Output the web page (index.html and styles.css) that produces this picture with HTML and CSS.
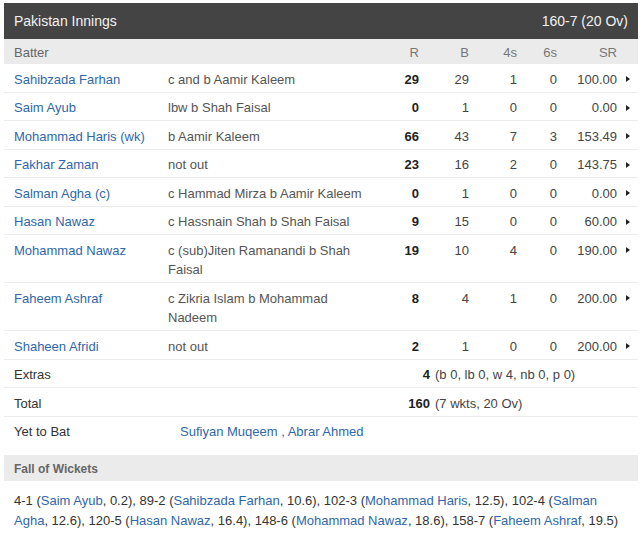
FILE: index.html
```html
<!DOCTYPE html>
<html>
<head>
<meta charset="utf-8">
<link rel="stylesheet" href="styles.css">
</head>
<body>
<div class="card">
  <div class="inn-head"><span>Pakistan Innings</span><span>160-7 (20 Ov)</span></div>

  <div class="bat-row head">
    <div>Batter</div><div></div><div class="n">R</div><div class="n">B</div><div class="n">4s</div><div class="n">6s</div><div class="n">SR</div><div></div>
  </div>

  <div class="bat-row">
    <a class="name">Sahibzada Farhan</a><div class="how">c and b Aamir Kaleem</div><div class="n r">29</div><div class="n">29</div><div class="n">1</div><div class="n">0</div><div class="n">100.00</div><div class="arr"><span class="tri"></span></div>
  </div>
  <div class="bat-row">
    <a class="name">Saim Ayub</a><div class="how">lbw b Shah Faisal</div><div class="n r">0</div><div class="n">1</div><div class="n">0</div><div class="n">0</div><div class="n">0.00</div><div class="arr"><span class="tri"></span></div>
  </div>
  <div class="bat-row">
    <a class="name">Mohammad Haris (wk)</a><div class="how">b Aamir Kaleem</div><div class="n r">66</div><div class="n">43</div><div class="n">7</div><div class="n">3</div><div class="n">153.49</div><div class="arr"><span class="tri"></span></div>
  </div>
  <div class="bat-row">
    <a class="name">Fakhar Zaman</a><div class="how">not out</div><div class="n r">23</div><div class="n">16</div><div class="n">2</div><div class="n">0</div><div class="n">143.75</div><div class="arr"><span class="tri"></span></div>
  </div>
  <div class="bat-row">
    <a class="name">Salman Agha (c)</a><div class="how">c Hammad Mirza b Aamir Kaleem</div><div class="n r">0</div><div class="n">1</div><div class="n">0</div><div class="n">0</div><div class="n">0.00</div><div class="arr"><span class="tri"></span></div>
  </div>
  <div class="bat-row">
    <a class="name">Hasan Nawaz</a><div class="how">c Hassnain Shah b Shah Faisal</div><div class="n r">9</div><div class="n">15</div><div class="n">0</div><div class="n">0</div><div class="n">60.00</div><div class="arr"><span class="tri"></span></div>
  </div>
  <div class="bat-row">
    <a class="name">Mohammad Nawaz</a><div class="how">c (sub)Jiten Ramanandi b Shah Faisal</div><div class="n r">19</div><div class="n">10</div><div class="n">4</div><div class="n">0</div><div class="n">190.00</div><div class="arr"><span class="tri"></span></div>
  </div>
  <div class="bat-row">
    <a class="name">Faheem Ashraf</a><div class="how">c Zikria Islam b Mohammad Nadeem</div><div class="n r">8</div><div class="n">4</div><div class="n">1</div><div class="n">0</div><div class="n">200.00</div><div class="arr"><span class="tri"></span></div>
  </div>
  <div class="bat-row">
    <a class="name">Shaheen Afridi</a><div class="how">not out</div><div class="n r">2</div><div class="n">1</div><div class="n">0</div><div class="n">0</div><div class="n">200.00</div><div class="arr"><span class="tri"></span></div>
  </div>

  <div class="sum-row">
    <div class="lbl">Extras</div><div class="num">4</div><div class="det">(b 0, lb 0, w 4, nb 0, p 0)</div>
  </div>
  <div class="sum-row">
    <div class="lbl">Total</div><div class="num">160</div><div class="det">(7 wkts, 20 Ov)</div>
  </div>
  <div class="ytb-row">
    <div class="lbl">Yet to Bat</div><div class="ytb"><a>Sufiyan Muqeem</a> , <a>Abrar Ahmed</a></div>
  </div>

  <div class="fow-head">Fall of Wickets</div>
  <div class="fow">4-1 (<a>Saim Ayub</a>, 0.2), 89-2 (<a>Sahibzada Farhan</a>, 10.6), 102-3 (<a>Mohammad Haris</a>, 12.5), 102-4 (<a>Salman Agha</a>, 12.6), 120-5 (<a>Hasan Nawaz</a>, 16.4), 148-6 (<a>Mohammad Nawaz</a>, 18.6), 158-7 (<a>Faheem Ashraf</a>, 19.5)</div>
</div>
</body>
</html>
```

FILE: styles.css
```css
html, body {
  margin: 0;
  padding: 0;
  background: #fff;
}
body {
  font-family: "Liberation Sans", Arial, sans-serif;
  font-size: 13px;
  line-height: 19.5px;
  color: #333;
}
.card {
  margin: 3px 4px 0 4px;
  width: 634px;
}
a {
  color: #2f67ad;
  text-decoration: none;
}
.inn-head {
  background: #444444;
  color: #f2f2f2;
  font-size: 14px;
  height: 35px;
  line-height: 35px;
  padding: 1px 10px 0 10px;
  display: flex;
  justify-content: space-between;
}
.bat-row {
  display: grid;
  grid-template-columns: 154px 204px 47px 50px 48px 40px 60px 1fr;
  padding: 5.5px 0 2.5px 10px;
  border-bottom: 1px solid #ececec;
  color: #444;
}
.bat-row.head {
  background: #ebebeb;
  color: #777;
  padding: 4px 0 1.5px 10px;
  border-bottom: none;
}
.bat-row.head > div:first-child {
  color: #666;
}
.how {
  color: #555;
  padding-right: 6px;
}
.n {
  text-align: right;
}
.n.r {
  font-weight: bold;
  color: #222;
}
.arr {
  padding-left: 9px;
  height: 19.5px;
  align-self: start;
  display: flex;
  align-items: center;
}
.tri {
  width: 0;
  height: 0;
  border-left: 4px solid #222;
  border-top: 3.5px solid transparent;
  border-bottom: 3.5px solid transparent;
}
.sum-row {
  display: grid;
  grid-template-columns: 370px 46px 1fr;
  padding: 5.5px 0 2.5px 10px;
  border-bottom: 1px solid #ececec;
}
.sum-row .num {
  text-align: right;
  font-weight: bold;
  color: #222;
}
.sum-row .det {
  padding-left: 5px;
  color: #444;
}
.ytb-row {
  display: grid;
  grid-template-columns: 166px 1fr;
  padding: 5.5px 0 2.5px 10px;
  margin-bottom: 11px;
}
.ytb {
  color: #2f67ad;
}
.fow-head {
  background: #ebebeb;
  color: #666;
  font-weight: bold;
  font-size: 12px;
  padding: 4.5px 10px 1.5px 10px;
}
.fow {
  padding: 10.5px 10px 0 10px;
  color: #333;
}
```
